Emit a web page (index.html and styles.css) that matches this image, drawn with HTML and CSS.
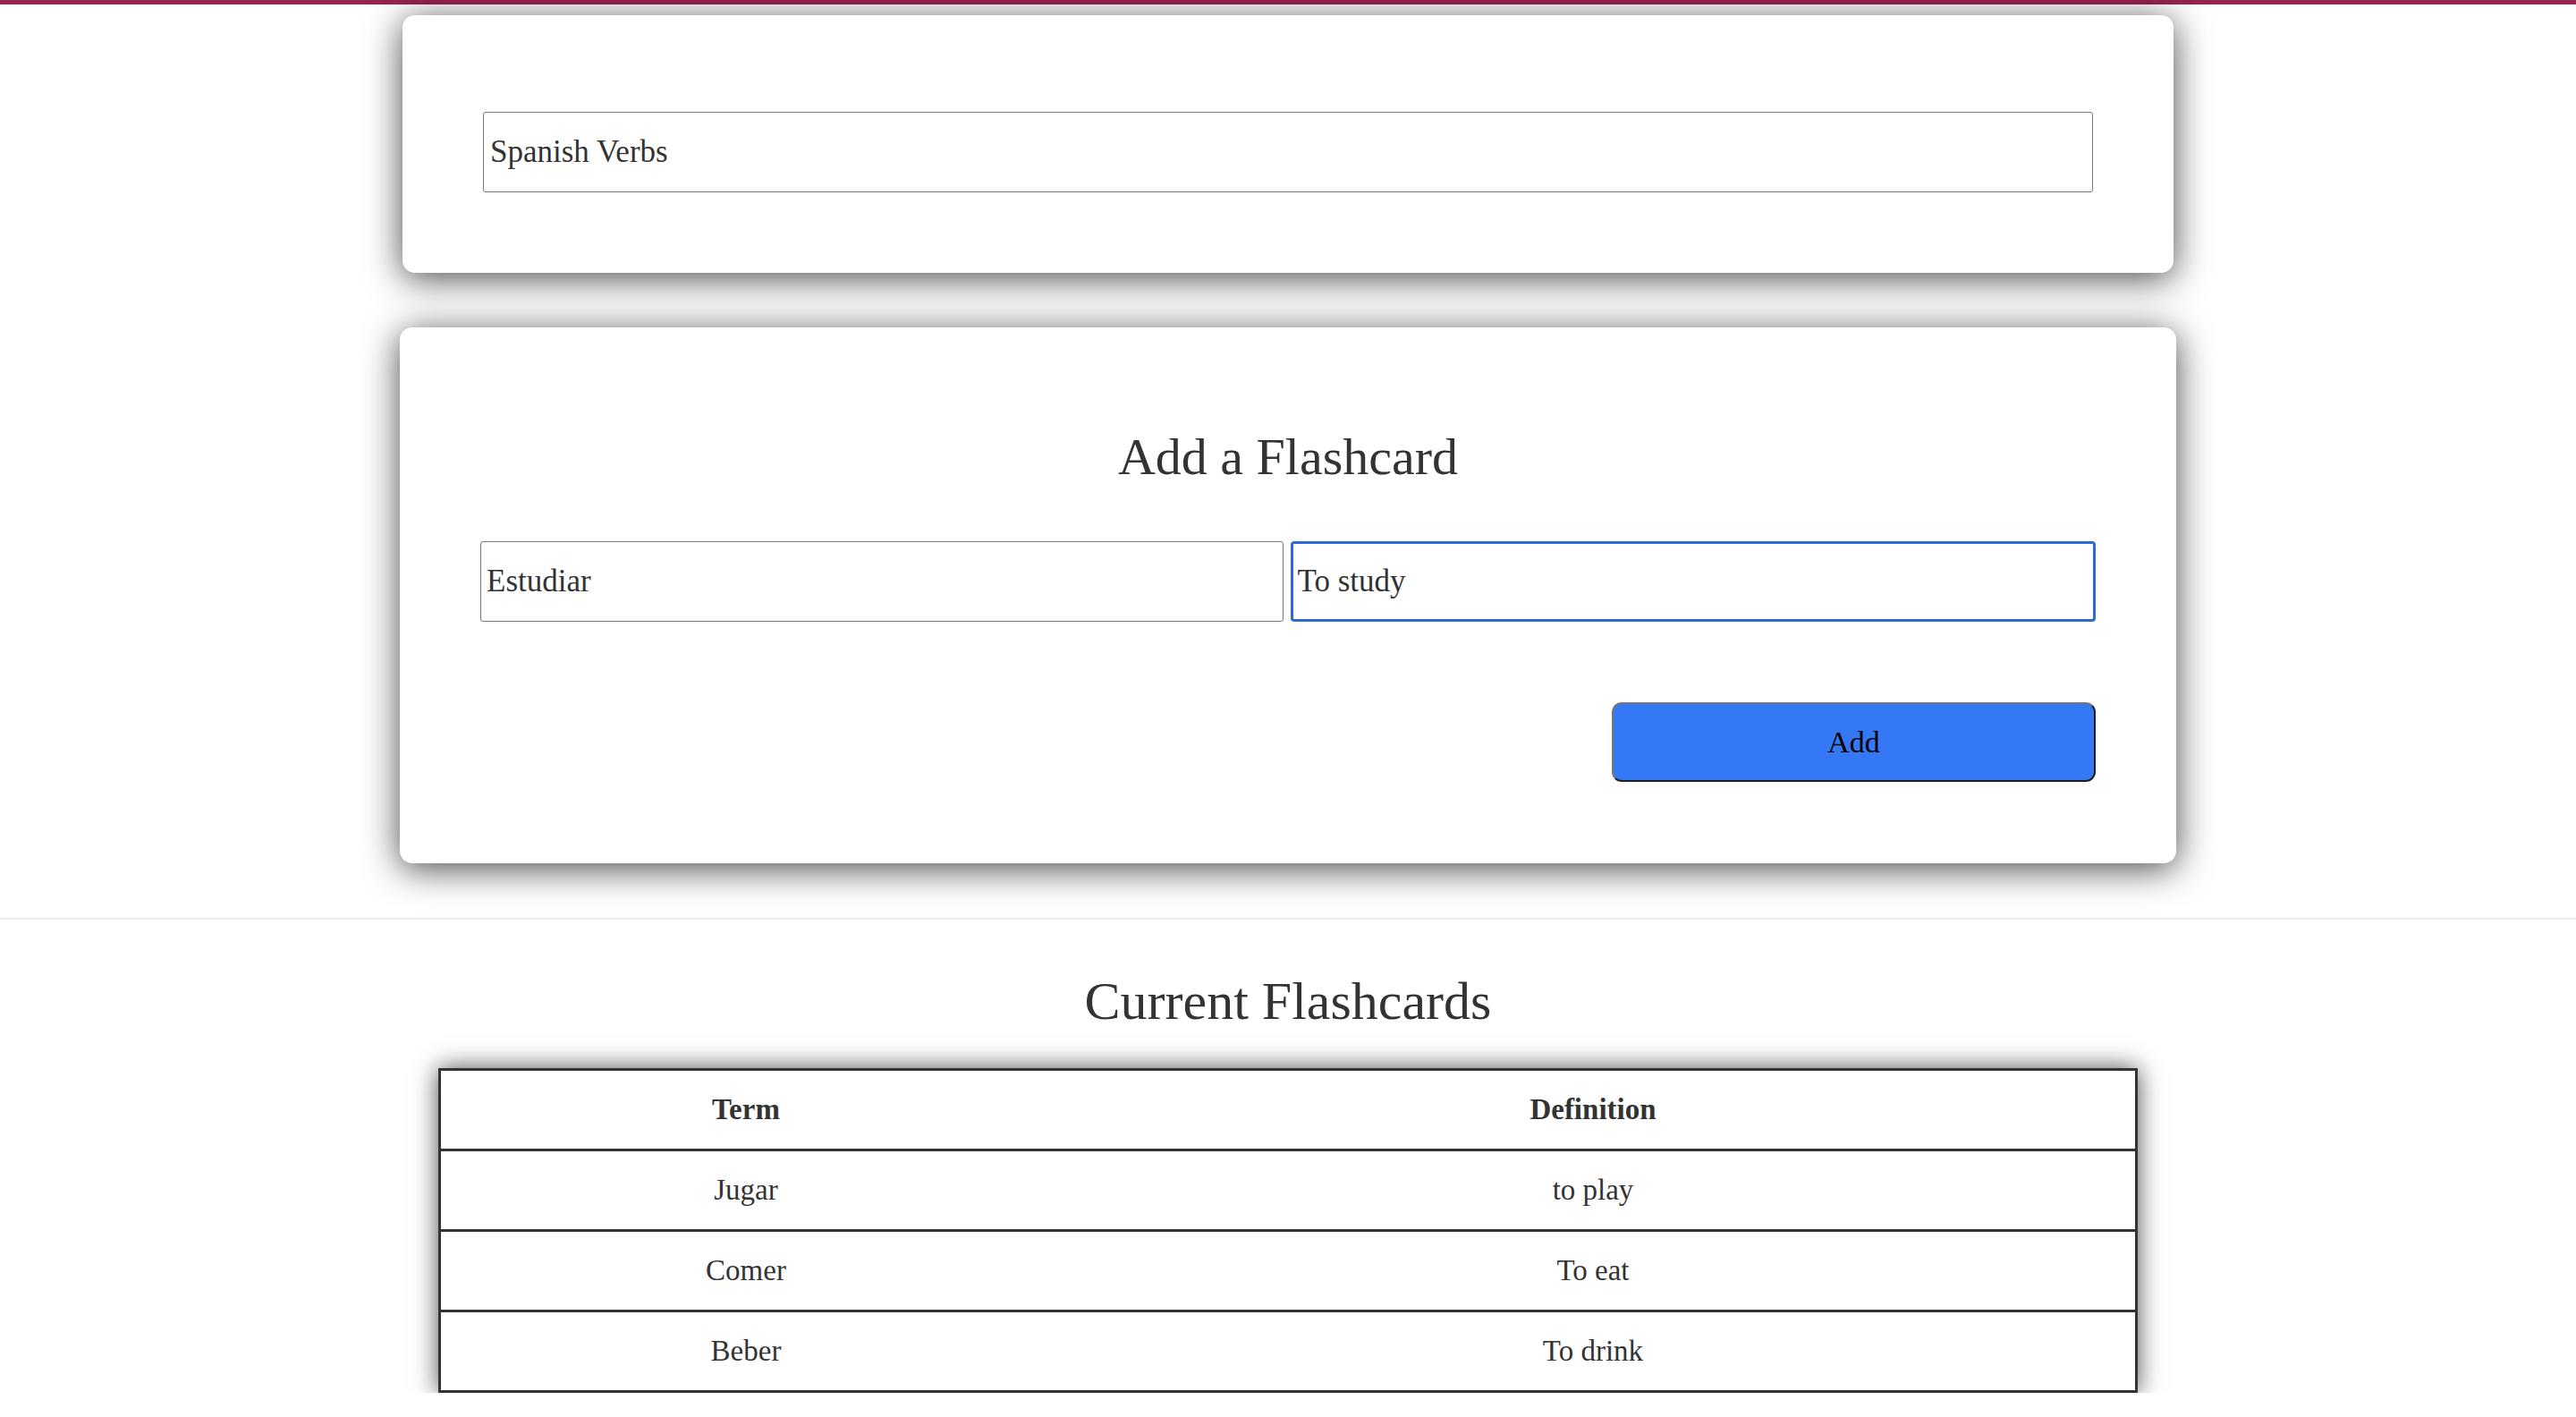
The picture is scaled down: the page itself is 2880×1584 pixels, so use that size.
FILE: index.html
```html
<!DOCTYPE html>
<html lang="en">
<head>
<meta charset="utf-8">
<title>Flashcards</title>
<link rel="stylesheet" href="styles.css">
</head>
<body>
<div class="topbar"></div>
<main class="page">
  <section class="card card-title">
    <input class="field" type="text" value="Spanish Verbs">
  </section>
  <section class="card card-add">
    <h2 class="heading">Add a Flashcard</h2>
    <div class="field-row">
      <input class="field" type="text" value="Estudiar">
      <input class="field field-focused" type="text" value="To study">
    </div>
    <div class="actions">
      <button class="btn-add" type="button">Add</button>
    </div>
  </section>
</main>
<section class="list">
  <h2 class="heading heading-list">Current Flashcards</h2>
  <table class="cards-table">
    <thead>
      <tr><th class="col-term">Term</th><th>Definition</th></tr>
    </thead>
    <tbody>
      <tr><td>Jugar</td><td>to play</td></tr>
      <tr><td>Comer</td><td>To eat</td></tr>
      <tr class="last"><td>Beber</td><td>To drink</td></tr>
    </tbody>
  </table>
</section>
</body>
</html>
```

FILE: styles.css
```css
* { box-sizing: border-box; }

html, body {
  margin: 0;
  padding: 0;
  background: #ffffff;
}

body {
  font-family: "Liberation Serif", "Times New Roman", serif;
  color: #333333;
}

.topbar {
  height: 5px;
  background: #982350;
}

.page {
  display: flex;
  flex-direction: column;
  align-items: center;
  padding-bottom: 61px;
  border-bottom: 2px solid #ebebeb;
}

.card {
  background: #ffffff;
  border-radius: 14px;
  box-shadow: 0 6px 40px rgba(0, 0, 0, 0.72);
}

.card-title {
  width: 1980px;
  margin-top: 12px;
  padding: 108px 90px 90px;
}

.card-add {
  width: 1986px;
  margin-top: 61px;
  padding: 90px 90px 91px;
}

.heading {
  margin: 0;
  font-size: 58px;
  line-height: 66px;
  font-weight: normal;
  text-align: center;
  color: #333333;
}

.heading-list {
  font-size: 60px;
}

.card-add .heading {
  margin: 22px 0 61px;
}

.field {
  display: block;
  width: 100%;
  height: 90px;
  margin: 0;
  padding: 0 7px;
  border: 1px solid #767676;
  border-radius: 3px;
  background: #ffffff;
  font-family: "Liberation Serif", "Times New Roman", serif;
  font-size: 35px;
  color: #333333;
  outline: none;
}

.field-row {
  display: flex;
  gap: 8px;
}

.field-row .field {
  flex: 1 1 0;
  min-width: 0;
  padding-left: 6px;
}

.field-row .field-focused {
  border: 3px solid #2f6ad2;
  border-radius: 4px;
  padding-left: 5px;
}

.actions {
  display: flex;
  justify-content: flex-end;
  margin-top: 90px;
}

.btn-add {
  width: 541px;
  height: 89px;
  margin: 0;
  padding: 0;
  background: #3478f6;
  border: 2px solid;
  border-color: #767676 #1e1e1e #1e1e1e #767676;
  border-radius: 11px;
  font-family: "Liberation Serif", "Times New Roman", serif;
  font-size: 34px;
  color: #000000;
  cursor: pointer;
}

.list {
  display: flex;
  flex-direction: column;
  align-items: center;
  padding-top: 58px;
}

.cards-table {
  width: 1900px;
  margin-top: 42px;
  border: 3px solid #333333;
  border-spacing: 0;
  background: #ffffff;
  box-shadow: 0 0 26px rgba(0, 0, 0, 0.7);
  font-size: 33px;
  color: #333333;
}

.cards-table th,
.cards-table td {
  height: 90px;
  padding: 0;
  text-align: center;
  vertical-align: middle;
  border-bottom: 3px solid #333333;
}

.cards-table th {
  font-weight: bold;
}

.cards-table .col-term {
  width: 682px;
}

.cards-table tr.last td {
  height: 87px;
  border-bottom: none;
}
```
